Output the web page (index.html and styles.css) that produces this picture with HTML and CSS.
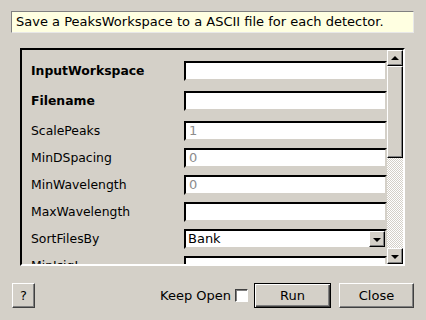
FILE: index.html
```html
<!DOCTYPE html>
<html lang="en">
  <head>
    <meta charset="UTF-8" />
    <title>SaveIsawPeaks</title>
    <link rel="stylesheet" href="styles.css">
  </head>
  <body>
    <div class="dialog">
      <!-- algorithm summary -->
      <div class="desc">Save a PeaksWorkspace to a ASCII file for each detector.</div>

      <!-- property list -->
      <div class="panel">
        <div class="fields">
          <div class="row req">
            <label>InputWorkspace</label>
            <div class="input"></div>
          </div>
          <div class="row req">
            <label>Filename</label>
            <div class="input"></div>
          </div>
          <div class="row">
            <label>ScalePeaks</label>
            <div class="input hint">1</div>
          </div>
          <div class="row">
            <label>MinDSpacing</label>
            <div class="input hint">0</div>
          </div>
          <div class="row">
            <label>MinWavelength</label>
            <div class="input hint">0</div>
          </div>
          <div class="row">
            <label>MaxWavelength</label>
            <div class="input"></div>
          </div>
          <div class="row">
            <label>SortFilesBy</label>
            <div class="input combo">
              <span>Bank</span>
              <span class="arrow-btn"><i class="down"></i></span>
            </div>
          </div>
          <div class="row">
            <label>MinIsigI</label>
            <div class="input"></div>
          </div>
        </div>
        <div class="scrollbar">
          <div class="arrow-btn sb"><i class="up"></i></div>
          <div class="thumb"></div>
          <div class="track"></div>
          <div class="arrow-btn sb"><i class="down"></i></div>
        </div>
      </div>

      <!-- buttons -->
      <div class="actions">
        <button class="btn help">?</button>
        <div class="spacer"></div>
        <label class="keep">Keep Open <span class="check"></span></label>
        <button class="btn run">Run</button>
        <button class="btn close">Close</button>
      </div>
    </div>
  </body>
</html>
```
FILE: styles.css
```css
body {
  margin: 0;
  background-color: #d4d0c8;
  font-family: "DejaVu Sans", sans-serif;
  font-size: 13px;
  color: #000;
}

.dialog {
  width: 426px;
  height: 320px;
  display: flex;
  flex-direction: column;
}

.desc {
  margin: 11px 12px 0 11px;
  height: 20px;
  line-height: 20px;
  padding-left: 4px;
  background-color: #ffffe1;
  border: 1px solid;
  border-color: #808080 #e8e8e8 #e8e8e8 #808080;
}

.panel {
  margin: 15px 0 0 20px;
  width: 381px;
  height: 214px;
  display: flex;
  overflow: hidden;
  border: 2px solid;
  border-color: #000 #fff #fff #000;
}

.fields {
  flex: 1;
  padding: 11px 0 0 9px;
  overflow: hidden;
}

.row {
  display: flex;
  align-items: center;
  height: 20px;
  margin-bottom: 7px;
}

.row.req {
  margin-bottom: 10px;
}

.row label {
  width: 153px;
  flex-shrink: 0;
  font-size: 12.4px;
  margin-top: -1px;
}

.row.req label {
  font-weight: bold;
}

.input {
  flex: 1;
  box-sizing: border-box;
  height: 20px;
  background-color: #fff;
  border: 2px solid;
  border-color: #000 #d4d0c8 #d4d0c8 #000;
  padding-left: 3px;
  line-height: 16px;
  display: flex;
  align-items: center;
}

.input.hint {
  color: #8c8c8c;
}

.combo {
  justify-content: space-between;
  padding-left: 2px;
}

.arrow-btn {
  box-sizing: border-box;
  width: 16px;
  height: 16px;
  background-color: #d4d0c8;
  border: 1px solid;
  border-color: #fff #000 #000 #fff;
  box-shadow: inset -1px -1px #808080;
  display: flex;
  align-items: center;
  justify-content: center;
}

i.down,
i.up {
  width: 0;
  height: 0;
  border-left: 4px solid transparent;
  border-right: 4px solid transparent;
}

i.down {
  border-top: 4px solid #000;
  margin-top: 1px;
}

i.up {
  border-bottom: 4px solid #000;
  margin-bottom: 1px;
}

.scrollbar {
  width: 16px;
  display: flex;
  flex-direction: column;
}

.thumb {
  box-sizing: border-box;
  height: 92px;
  background-color: #d4d0c8;
  border: 1px solid;
  border-color: #fff #000 #000 #fff;
  box-shadow: inset -1px -1px #808080;
}

.track {
  flex: 1;
  background: repeating-conic-gradient(#d4d0c8 0 25%, #fff 0 50%) 0 0 / 2px 2px;
}

.actions {
  display: flex;
  align-items: center;
  margin: 17px 12px 0 12px;
  height: 25px;
}

.spacer {
  flex: 1;
}

.btn {
  box-sizing: border-box;
  height: 25px;
  background-color: #d4d0c8;
  font-family: "DejaVu Sans", sans-serif;
  font-size: 13px;
  color: #000;
  border: 1px solid;
  border-color: #fff #404040 #404040 #fff;
  box-shadow: inset -1px -1px #808080;
  padding: 0;
}

.help {
  width: 23px;
}

.keep {
  display: flex;
  align-items: center;
  gap: 4px;
  margin-right: 6px;
}

.check {
  box-sizing: border-box;
  width: 13px;
  height: 13px;
  background-color: #fff;
  border: 1px solid;
  border-color: #404040 #fff #fff #404040;
  box-shadow: inset 1px 1px #808080;
}

.run {
  width: 77px;
  margin-right: 8px;
  border: 1px solid #000;
  box-shadow: inset 1px 1px #fff, inset -1px -1px #404040, inset -2px -2px #808080;
}

.close {
  width: 75px;
}
```
